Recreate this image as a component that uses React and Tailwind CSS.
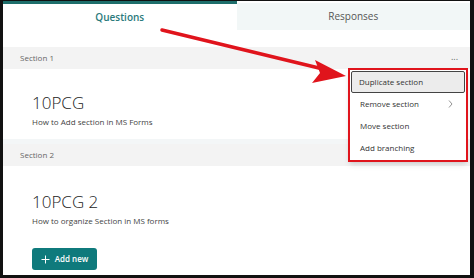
import React from "react";

const font = { fontFamily: '"Segoe UI", "Open Sans", "Noto Sans", sans-serif' };

function SectionHeader({ label, dots }) {
    return (
        <div className="h-[22px] bg-[#f3f3f3] flex items-center justify-between pl-[17px] pr-[12px]">
            <span className="text-[8px] text-[#666]">{label}</span>
            {dots && <span className="text-[9px] text-[#666] leading-none -mt-[4px]">...</span>}
        </div>
    );
}

export default function App() {
    return (
        <div className="w-[474px] h-[278px] bg-[#111] pl-[3px] pr-[4px] pb-[3px] pt-px overflow-hidden" style={font}>
            <div className="relative w-full h-full bg-white flex flex-col">
                {/* tabs */}
                <div className="flex h-[29px]">
                    <div className="flex-1 border-t-[3px] border-[#1e6e6b] bg-white flex items-center justify-center">
                        <span className="text-[10px] font-semibold text-[#2a7a7c]">Questions</span>
                    </div>
                    <div className="flex-1 mt-[2px] bg-[#f2f7f7] flex items-center justify-center">
                        <span className="text-[10px] text-[#555]">Responses</span>
                    </div>
                </div>
                <div className="h-[17px]" />
                <SectionHeader label="Section 1" dots />
                <div className="h-[70px] pl-[29px] pt-[25px] flex flex-col">
                    <div className="text-[17px] text-[#222] leading-none font-light">10PCG</div>
                    <div className="text-[8px] text-[#444] mt-[5px]">How to Add section in MS Forms</div>
                </div>
                <div className="h-[5px] bg-[#f3f6f7]" />
                <SectionHeader label="Section 2" />
                <div className="flex-1 pl-[29px] pt-[27px] flex flex-col">
                    <div className="text-[17px] text-[#222] leading-none font-light">10PCG 2</div>
                    <div className="text-[8px] text-[#444] mt-[5px]">How to organize Section in MS forms</div>
                    <button className="mt-[21px] w-[65px] h-[22px] rounded-[3px] bg-[#0f7a7c] text-white flex items-center justify-center gap-[5px]">
                        <svg width="9" height="9" viewBox="0 0 9 9">
                            <path d="M4.5 0.5v8M0.5 4.5h8" stroke="white" strokeWidth="1" />
                        </svg>
                        <span className="text-[8px] font-semibold">Add new</span>
                    </button>
                </div>

                {/* context menu */}
                <div className="absolute left-[345px] top-[67px] w-[120px] h-[94px] border-2 border-[#e0141c] bg-white shadow-md p-px flex flex-col">
                    <div className="h-[22px] bg-[#ececec] border-[1.5px] border-[#444] rounded-[2px] flex items-center pl-[7px]">
                        <span className="text-[8px] text-[#333]">Duplicate section</span>
                    </div>
                    <div className="h-[22px] flex items-center justify-between pl-[9px] pr-[12px]">
                        <span className="text-[8px] text-[#333]">Remove section</span>
                        <svg width="5" height="8" viewBox="0 0 5 8">
                            <path d="M1 0.5l3 3.5-3 3.5" stroke="#777" strokeWidth="0.8" fill="none" />
                        </svg>
                    </div>
                    <div className="h-[22px] flex items-center pl-[9px]">
                        <span className="text-[8px] text-[#333]">Move section</span>
                    </div>
                    <div className="h-[22px] flex items-center pl-[9px]">
                        <span className="text-[8px] text-[#333]">Add branching</span>
                    </div>
                </div>

                {/* red arrow */}
                <svg className="absolute left-0 top-0 pointer-events-none" width="467" height="274">
                    <line x1="159" y1="29" x2="320" y2="68" stroke="#e0141c" strokeWidth="3.5" strokeLinecap="round" />
                    <polygon points="343,75 312,59 317,72 309,82" fill="#e0141c" />
                </svg>
            </div>
        </div>
    );
}
